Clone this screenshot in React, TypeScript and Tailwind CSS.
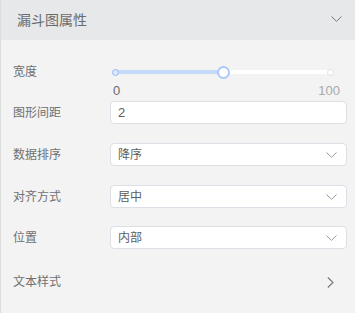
import React from "react";

const Chevron = ({ className }: { className?: string }) => (
  <svg width="11" height="6" viewBox="0 0 11 6" className={className}>
    <path d="M0.5 0.5 L5.5 5.3 L10.5 0.5" fill="none" stroke="currentColor" strokeWidth="1" />
  </svg>
);

const ChevronRight = () => (
  <svg width="7" height="11" viewBox="0 0 7 11" className="text-[#777]">
    <path d="M0.8 0.5 L6 5.5 L0.8 10.5" fill="none" stroke="currentColor" strokeWidth="1.1" />
  </svg>
);

const Label = ({ children }: { children: React.ReactNode }) => (
  <div className="w-[97px] shrink-0 text-[12px] leading-[16px] text-[#707070]">{children}</div>
);

const Select = ({ value }: { value: string }) => (
  <div className="flex-1 h-[23px] bg-white border border-[#dcdfe6] rounded-[4px] flex items-center justify-between pl-[7px] pr-[9px]">
    <span className="text-[12px] leading-[16px] text-[#5e5e5e]">{value}</span>
    <Chevron className="text-[#999]" />
  </div>
);

export default function App() {
  return (
    <div
      className="w-[355px] h-[313px] bg-[#f3f3f3] border-l border-[#dcdcdc] overflow-hidden"
      style={{ fontFamily: "'Liberation Sans', 'Noto Sans CJK SC', sans-serif" }}
    >
      <div className="h-[40px] bg-[#e7e8ea] flex items-center justify-between pl-[16px] pr-[13px]">
        <span className="text-[14px] leading-[20px] text-[#6a6a6a]">漏斗图属性</span>
        <Chevron className="text-[#777] mt-[-2px]" />
      </div>
      <div className="pl-[12px] pr-[8px] pt-[25px] flex flex-col">
        <div className="flex items-center h-[14px]">
          <Label>宽度</Label>
          <div className="flex-1 pl-[5px] pr-[17px]">
            <div className="relative h-[14px]">
              <div className="absolute left-0 right-0 top-[5px] h-[4px] bg-white rounded-full" />
              <div className="absolute left-0 w-[108px] top-[5px] h-[4px] bg-[#c6dbfb] rounded-full" />
              <div className="absolute left-[-3.5px] top-[3.5px] w-[7px] h-[7px] rounded-full bg-[#dce9fd] border-[1.5px] border-[#8fb7f6]" />
              <div className="absolute left-[211.5px] top-[3.5px] w-[7px] h-[7px] rounded-full bg-white border-[1.5px] border-[#e0e0e0]" />
              <div className="absolute left-[101.5px] top-[0.5px] w-[13px] h-[13px] rounded-full bg-white border-2 border-[#a9c9fa]" />
            </div>
          </div>
        </div>
        <div className="flex mt-[4px] h-[16px]">
          <div className="w-[97px] shrink-0" />
          <div className="flex-1 flex justify-between pl-[3px] pr-[7px] text-[13px] leading-[16px]">
            <span className="text-[#6a6a6a]">0</span>
            <span className="text-[#aaa]">100</span>
          </div>
        </div>
        <div className="flex items-center mt-[2px]">
          <Label>图形间距</Label>
          <div className="flex-1 h-[23px] bg-white border border-[#dcdfe6] rounded-[4px] flex items-center pl-[7px]">
            <span className="text-[13px] leading-[16px] text-[#5e5e5e]">2</span>
          </div>
        </div>
        <div className="flex items-center mt-[19px]">
          <Label>数据排序</Label>
          <Select value="降序" />
        </div>
        <div className="flex items-center mt-[19px]">
          <Label>对齐方式</Label>
          <Select value="居中" />
        </div>
        <div className="flex items-center mt-[18px]">
          <Label>位置</Label>
          <Select value="内部" />
        </div>
        <div className="flex items-center justify-between mt-[25px] h-[16px] pr-[13px]">
          <Label>文本样式</Label>
          <ChevronRight />
        </div>
      </div>
    </div>
  );
}
